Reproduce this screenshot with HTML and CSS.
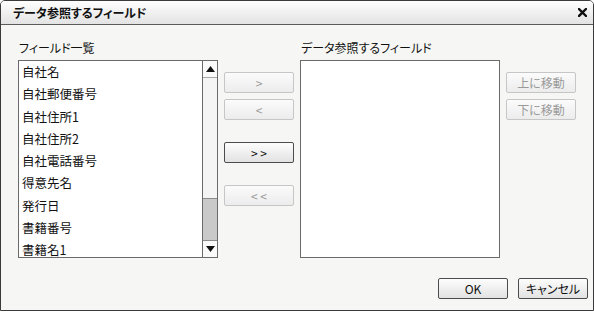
FILE: index.html
```html
<!DOCTYPE html>
<html lang="ja">
<head>
<meta charset="utf-8">
<link rel="stylesheet" href="styles.css">
</head>
<body>
<div class="dialog">
  <div class="titlebar">
    <span class="title">データ参照するフィールド</span>
    <span class="close">
      <svg width="9" height="9" viewBox="0 0 9 9"><path d="M1 1 L8 8 M8 1 L1 8" stroke="#111" stroke-width="2.4" stroke-linecap="square"/></svg>
    </span>
  </div>
  <div class="content">
    <div class="main">
      <div class="col">
        <div class="label">フィールド一覧</div>
        <div class="listbox">
          <ul class="items">
            <li>自社名</li>
            <li>自社郵便番号</li>
            <li>自社住所1</li>
            <li>自社住所2</li>
            <li>自社電話番号</li>
            <li>得意先名</li>
            <li>発行日</li>
            <li>書籍番号</li>
            <li>書籍名1</li>
          </ul>
          <div class="scrollbar">
            <div class="arrow up"><svg width="9" height="6" viewBox="0 0 9 6"><path d="M0 6 L4.5 0 L9 6 Z" fill="#111"/></svg></div>
            <div class="track"></div>
            <div class="thumb"></div>
            <div class="arrow down"><svg width="9" height="6" viewBox="0 0 9 6"><path d="M0 0 L4.5 6 L9 0 Z" fill="#111"/></svg></div>
          </div>
        </div>
      </div>
      <div class="midbtns">
        <button class="btn disabled b1">&gt;</button>
        <button class="btn disabled b2">&lt;</button>
        <button class="btn b3">&gt; &gt;</button>
        <button class="btn disabled b4">&lt; &lt;</button>
      </div>
      <div class="col">
        <div class="label">データ参照するフィールド</div>
        <div class="listbox empty"></div>
      </div>
      <div class="sidebtns">
        <button class="btn disabled b1">上に移動</button>
        <button class="btn disabled b2">下に移動</button>
      </div>
    </div>
    <div class="footer">
      <button class="btn">OK</button>
      <button class="btn">キャンセル</button>
    </div>
  </div>
</div>
</body>
</html>
```
FILE: styles.css
```css
* { box-sizing: border-box; }
html, body { margin: 0; padding: 0; background: #ffffff; }
body {
  font-family: "Noto Sans CJK JP", "Noto Sans", sans-serif;
  font-size: 12px;
  color: #111;
  font-feature-settings: "palt";
}
.dialog {
  width: 594px;
  height: 311px;
  border: 1px solid #3a3a3a;
  border-radius: 5px 5px 0 0;
  background: #f6f7f4;
  overflow: hidden;
}
.titlebar {
  height: 24px;
  border-bottom: 1px solid #5a5a5a;
  background: linear-gradient(#fefefe, #e3e3e3);
  display: flex;
  align-items: center;
  justify-content: space-between;
  padding: 0 6px 0 12px;
}
.title { font-weight: bold; font-size: 12px; line-height: 16px; }
.close { display: flex; align-items: center; }
.content { padding: 15px 0 0 17px; }
.main { display: flex; height: 218px; }
.col { width: 200px; display: flex; flex-direction: column; }
.label { height: 20px; line-height: 16px; font-size: 12px; padding-left: 1px; }
.listbox {
  height: 198px;
  border: 1px solid #6a6a6a;
  background: #fff;
  display: flex;
}
.items {
  list-style: none;
  margin: 0;
  padding: 0;
  flex: 1;
}
.items li {
  height: 22.25px;
  line-height: 21px;
  padding-left: 3px;
  font-size: 12.5px;
}
.scrollbar {
  width: 15px;
  border-left: 1px solid #6a6a6a;
  display: flex;
  flex-direction: column;
  background: #f2f2f2;
}
.arrow {
  height: 17px;
  display: flex;
  align-items: center;
  justify-content: center;
  background: #fafafa;
}
.arrow.up { border-bottom: 1px solid #a8a8a8; }
.arrow.down { border-top: 1px solid #8a8a8a; }
.track { flex: 1; background: #f4f4f4; }
.thumb {
  height: 42px;
  background: #c9c9c9;
  border-top: 1px solid #8c8c8c;
}
.btn {
  display: block;
  width: 70px;
  height: 21px;
  padding: 0;
  border: 1px solid #4c4c4c;
  border-radius: 2px;
  background: linear-gradient(#fdfdfd, #e2e2e2);
  font-family: inherit;
  font-size: 12px;
  color: #111;
  line-height: 18px;
  font-feature-settings: "palt";
}
.btn.disabled {
  border-color: #c6c6c6;
  background: linear-gradient(#fbfbfb, #ececec);
  color: #9a9a9a;
}
.midbtns {
  width: 70px;
  margin: 0 6px;
  padding-top: 32px;
  display: flex;
  flex-direction: column;
}
.midbtns .b2 { margin-top: 6px; }
.midbtns .b3 { margin-top: 22px; }
.midbtns .b4 { margin-top: 22px; }
.sidebtns {
  width: 70px;
  margin-left: 6px;
  padding-top: 32px;
  display: flex;
  flex-direction: column;
}
.sidebtns .b2 { margin-top: 6px; }
.footer {
  display: flex;
  justify-content: flex-end;
  gap: 10px;
  padding-right: 5px;
  margin-top: 20px;
}
```
